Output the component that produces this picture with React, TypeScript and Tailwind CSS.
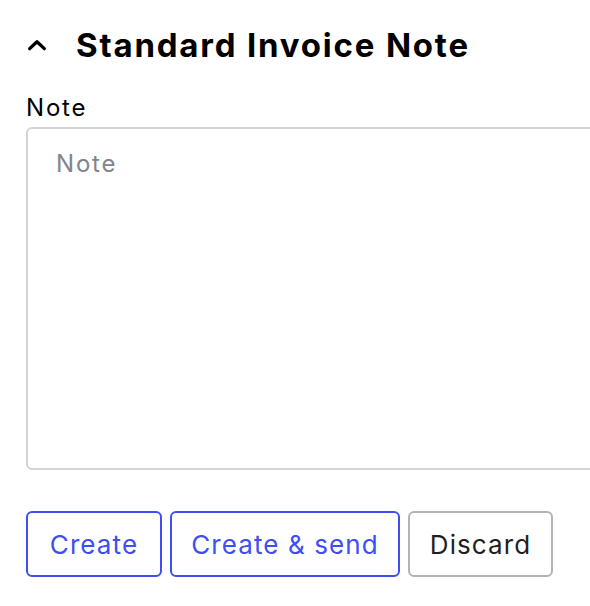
import { useState } from "react";

export default function App() {
  const [open, setOpen] = useState(true);
  const [note, setNote] = useState("");

  return (
    <div className="w-[590px] h-[606px] overflow-hidden bg-white font-['Inter',sans-serif]">
      <div className="pl-[26px] pt-[22px]">
        <button
          type="button"
          onClick={() => setOpen(!open)}
          className="flex items-center gap-[28px] text-black"
        >
          <svg
            width="22"
            height="22"
            viewBox="0 0 24 24"
            fill="none"
            stroke="currentColor"
            strokeWidth="3.6"
            strokeLinecap="round"
            strokeLinejoin="round"
            className={open ? "" : "rotate-180"}
          >
            <path d="M4 16l8-7.5 8 7.5" />
          </svg>
          <span className="text-[33px] leading-[46px] font-bold tracking-[1.8px]">
            Standard Invoice Note
          </span>
        </button>

        {open && (
          <div className="mt-[25px]">
            <label htmlFor="note" className="block text-[24px] leading-[30px] tracking-[1.8px] text-black">
              Note
            </label>
            <textarea
              id="note"
              value={note}
              onChange={(e) => setNote(e.target.value)}
              placeholder="Note"
              className="mt-[4px] block w-[620px] h-[343px] resize-none rounded-[6px] border-2 border-[#d1d5db] px-[28px] pt-[20px] text-[24px] leading-[30px] tracking-[1.8px] text-black placeholder:text-[#80858c] outline-none"
            />
            <div className="mt-[41px] flex gap-[8px] tracking-[1.1px]">
              <button className="h-[66px] w-[136px] rounded-[6px] border-2 border-[#3d4ef2] text-[26px] text-[#3d4ef2]">
                Create
              </button>
              <button className="h-[66px] w-[230px] rounded-[6px] border-2 border-[#3d4ef2] text-[26px] text-[#3d4ef2]">
                Create &amp; send
              </button>
              <button className="h-[66px] w-[145px] rounded-[6px] border-2 border-[#b3b3b3] text-[26px] text-[#1f1f1f]">
                Discard
              </button>
            </div>
          </div>
        )}
      </div>
    </div>
  );
}
